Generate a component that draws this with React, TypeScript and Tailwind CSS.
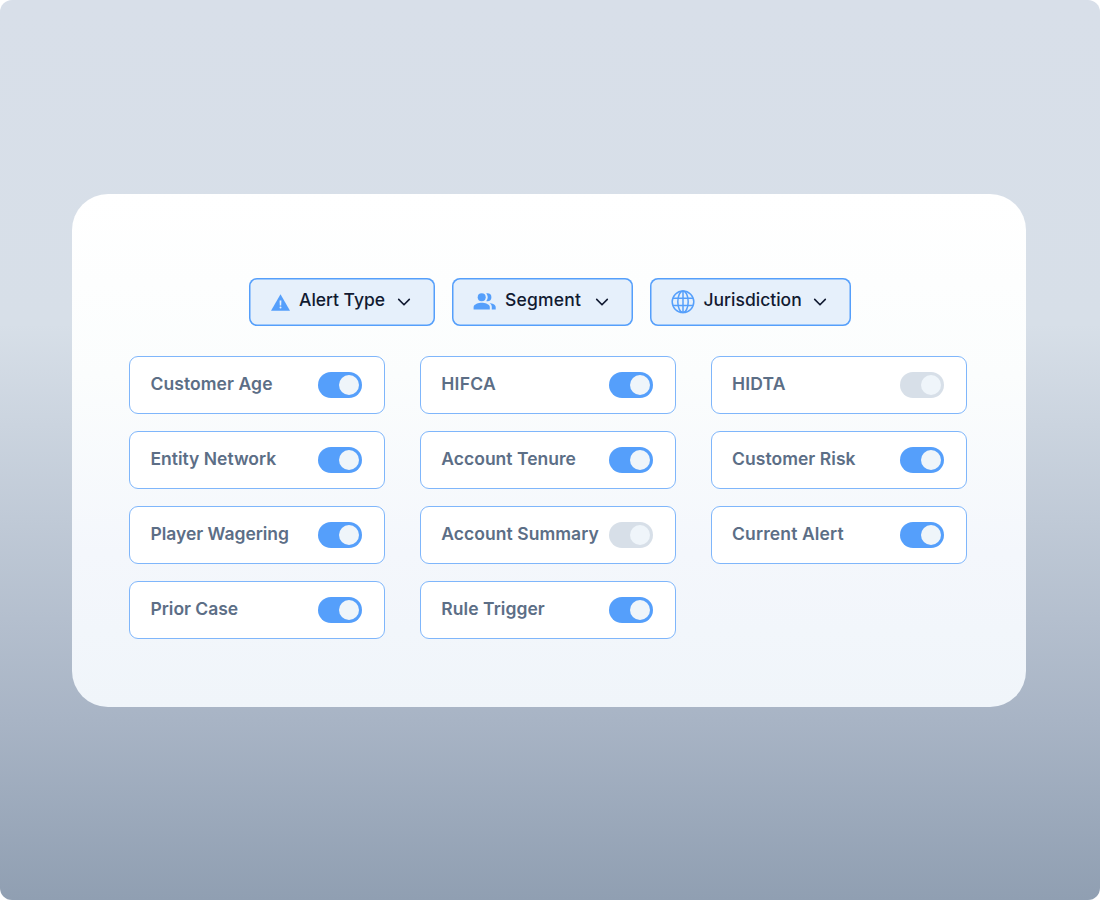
import type { ReactNode } from 'react';
import clsx from 'clsx';

type Filter = {
  label: string;
  icon: ReactNode;
  width: string;
  iconBox: string;
  text: string;
};

type Attribute = {
  label: string;
  enabled: boolean;
  tracking: string;
};

const AlertIcon = () => (
  <svg className="block h-[17px] w-[19px]" viewBox="0 0 19 17" fill="none">
    <path d="M9.5 0.3L19 16.7H0L9.5 0.3Z" fill="#559FFB" />
    <path d="M8.6 6.5H10.4L10.2 11.6H8.8L8.6 6.5Z" fill="#E6F0FB" />
    <circle cx="9.5" cy="13.4" r="1" fill="#E6F0FB" />
  </svg>
);

const PeopleIcon = () => (
  <svg className="block h-[17px] w-[23px]" viewBox="0 0 23 17" fill="#559FFB">
    <circle cx="8.7" cy="4.3" r="4" />
    <path d="M13.2 0.5C13.6 0.36 14 0.3 14.4 0.3A4 4 0 0 1 14.4 8.3C14 8.3 13.6 8.24 13.2 8.1C14.1 7.1 14.7 5.8 14.7 4.3C14.7 2.8 14.1 1.5 13.2 0.5Z" />
    <path d="M0.6 14C0.6 11.2 5.9 9.8 8.7 9.8C11.5 9.8 16.8 11.2 16.8 14V16.6H0.6V14Z" />
    <path d="M16.5 10C19.3 10.4 22.7 11.7 22.7 14V16.6H18.8V14C18.8 12.2 17.9 10.9 16.5 10Z" />
  </svg>
);

const GlobeIcon = () => (
  <svg className="block size-6" viewBox="0 0 24 24" fill="none" stroke="#559FFB" strokeWidth="1.5">
    <circle cx="12" cy="11.8" r="10.8" />
    <ellipse cx="12" cy="11.8" rx="5.2" ry="10.8" />
    <path d="M12 1V22.6M2 8.2H22M2 15.6H22" />
  </svg>
);

const Chevron = () => (
  <svg className="-mt-px block h-2 w-3.5 shrink-0" viewBox="0 0 14 8" fill="none">
    <path d="M1.7 1.4L7 6.8L12.3 1.4" stroke="#111A31" strokeWidth="1.6" strokeLinecap="round" strokeLinejoin="round" />
  </svg>
);

const FILTERS: Filter[] = [
  { label: 'Alert Type', icon: <AlertIcon />, width: 'w-[186px]', iconBox: 'ml-[22px] w-[19px] pt-[1px]', text: 'ml-[9px] w-[86px] tracking-[-0.03px]' },
  { label: 'Segment', icon: <PeopleIcon />, width: 'w-[181px]', iconBox: 'ml-[21px] w-[23px] -mt-[1px]', text: 'ml-[9px] w-[78px] tracking-[0.2px]' },
  { label: 'Jurisdiction', icon: <GlobeIcon />, width: 'w-[201px]', iconBox: 'ml-[21px] w-6', text: 'ml-[8.5px] w-[97.5px] tracking-normal' },
];

const ATTRIBUTES: Attribute[] = [
  { label: 'Customer Age', enabled: true, tracking: 'tracking-[0.08px]' },
  { label: 'HIFCA', enabled: true, tracking: 'tracking-[0.25px]' },
  { label: 'HIDTA', enabled: false, tracking: 'tracking-[0.15px]' },
  { label: 'Entity Network', enabled: true, tracking: 'tracking-normal' },
  { label: 'Account Tenure', enabled: true, tracking: 'tracking-[0.02px]' },
  { label: 'Customer Risk', enabled: true, tracking: 'tracking-[0.04px]' },
  { label: 'Player Wagering', enabled: true, tracking: 'tracking-[-0.03px]' },
  { label: 'Account Summary', enabled: false, tracking: 'tracking-[0.05px]' },
  { label: 'Current Alert', enabled: true, tracking: 'tracking-[0.12px]' },
  { label: 'Prior Case', enabled: true, tracking: 'tracking-[-0.03px]' },
  { label: 'Rule Trigger', enabled: true, tracking: 'tracking-[0.05px]' },
];

function FilterButton({ filter }: { filter: Filter }) {
  return (
    <button
      className={clsx(
        'flex h-12 items-center rounded-[8px] bg-[#E6F0FB] shadow-[inset_0_0_0_1.5px_#559FFB]',
        filter.width,
      )}
    >
      <span className={clsx('shrink-0', filter.iconBox)}>{filter.icon}</span>
      <span className={clsx('-mt-[4px] mr-3 shrink-0 text-left text-[17.5px] leading-6 font-medium whitespace-nowrap text-[#111A31]', filter.text)}>
        {filter.label}
      </span>
      <Chevron />
    </button>
  );
}

function Toggle({ enabled }: { enabled: boolean }) {
  return (
    <button
      role="switch"
      aria-checked={enabled}
      className={clsx(
        'flex h-[26px] w-11 shrink-0 items-center justify-end rounded-full pr-[3px]',
        enabled ? 'bg-[#559FFB]' : 'bg-[#D7DFE8]',
      )}
    >
      <span className="size-5 rounded-full bg-[#EFF5FA]" />
    </button>
  );
}

export default function App() {
  return (
    <div className="h-[900px] w-[1100px] bg-white font-['Inter','Liberation_Sans',sans-serif]">
      <div className="h-full rounded-[12px] bg-[linear-gradient(180deg,#D8DFE9_0%,#D7DFE8_36%,#A8B4C5_80%,#909FB2_100%)] pt-[194px] pl-[72px]">
        <main className="h-[513px] w-[954px] rounded-[36px] bg-[linear-gradient(180deg,#FFFFFF_0%,#FBFDFD_35%,#F4F7FC_70%,#F0F5FA_100%)] px-[57px] pt-[84px]">
          <div className="ml-[120px] flex gap-[17px]">
            {FILTERS.map((filter) => (
              <FilterButton key={filter.label} filter={filter} />
            ))}
          </div>

          <div className="mt-[30px] grid grid-cols-[repeat(3,256px)] gap-x-[34.8px] gap-y-[17px]">
            {ATTRIBUTES.map((item) => (
              <div
                key={item.label}
                className="flex h-[58px] items-center justify-between rounded-[9px] border border-[#7FB6FB] bg-white pr-[22px] pl-[20.5px]"
              >
                <span className={clsx('-mt-[3px] text-[17.5px] leading-6 font-semibold whitespace-nowrap text-[#5C6E86]', item.tracking)}>
                  {item.label}
                </span>
                <Toggle enabled={item.enabled} />
              </div>
            ))}
          </div>
        </main>
      </div>
    </div>
  );
}
